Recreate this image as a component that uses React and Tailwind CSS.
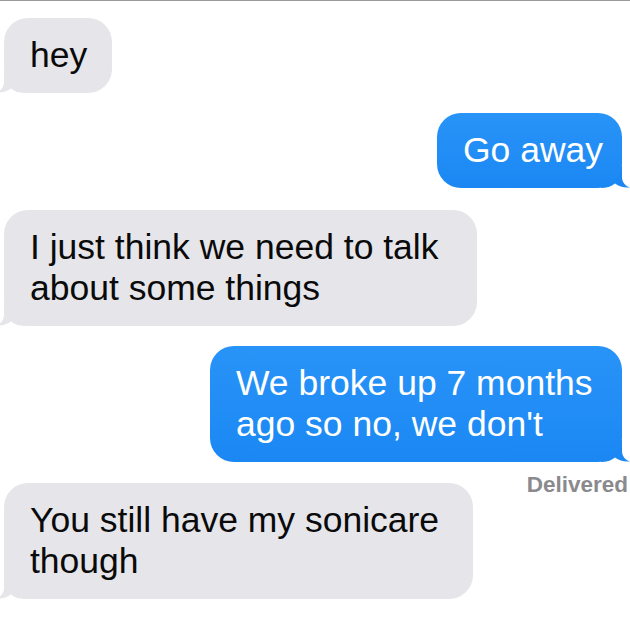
import React from 'react';

const GRAY = '#e5e5ea';
const BLUE_BOTTOM = '#1b87f3';

// bubble tail, drawn for the left side; mirrored for the right
const Tail = ({ side, color }) => (
  <svg
    width="29"
    height="22"
    viewBox="0 0 29 22"
    className={side === 'left' ? 'absolute -left-[8px] bottom-0' : 'absolute -right-[8px] bottom-0'}
  >
    <g transform={side === 'left' ? undefined : 'translate(29 0) scale(-1 1)'}>
      <path
        d="M8 0 L8 11 C8 16 5 20 0 21.5 C6 22 11 20.5 15 17.6 C19 20.8 23 22 29 22 L29 0 Z"
        fill={color}
      />
    </g>
  </svg>
);

const Received = ({ children, width, className = '' }) => (
  <div className={`relative self-start ml-[4px] ${width} ${className}`}>
    <div className="relative z-10 rounded-[24px] bg-[#e5e5ea] pl-[26px] pr-[20px] py-[17px] text-[35.5px] leading-[41px] text-[#0a0a0a]">
      {children}
    </div>
    <Tail side="left" color={GRAY} />
  </div>
);

const Sent = ({ children, width, className = '' }) => (
  <div className={`relative self-end mr-[8px] ${width} ${className}`}>
    <div className="relative z-10 rounded-[24px] bg-linear-to-b from-[#2894f8] to-[#1b87f3] pl-[26px] pr-[14px] py-[17px] text-[35.5px] leading-[41px] text-white">
      {children}
    </div>
    <Tail side="right" color={BLUE_BOTTOM} />
  </div>
);

const App = () => {
  return (
    <div className="w-[630px] h-[630px] overflow-hidden bg-white border-t border-[#9a9a9a] font-['Liberation_Sans',Arial,sans-serif]">
      <div className="flex flex-col pt-[17px]">
        <Received width="w-[108px]">hey</Received>
        <Sent width="w-[185px]" className="mt-[20px]">Go away</Sent>
        <Received width="w-[473px]" className="mt-[22px]">
          I just think we need to talk about some things
        </Received>
        <Sent width="w-[412px]" className="mt-[20px]">
          We broke up 7 months ago so no, we don't
        </Sent>
        <div className="self-end mr-[2px] mt-[10px] -mb-[15px] text-[22.5px] leading-[26px] font-bold text-[#8a8a8e]">
          Delivered
        </div>
        <Received width="w-[469px]">You still have my sonicare though</Received>
      </div>
    </div>
  );
};

export default App;
